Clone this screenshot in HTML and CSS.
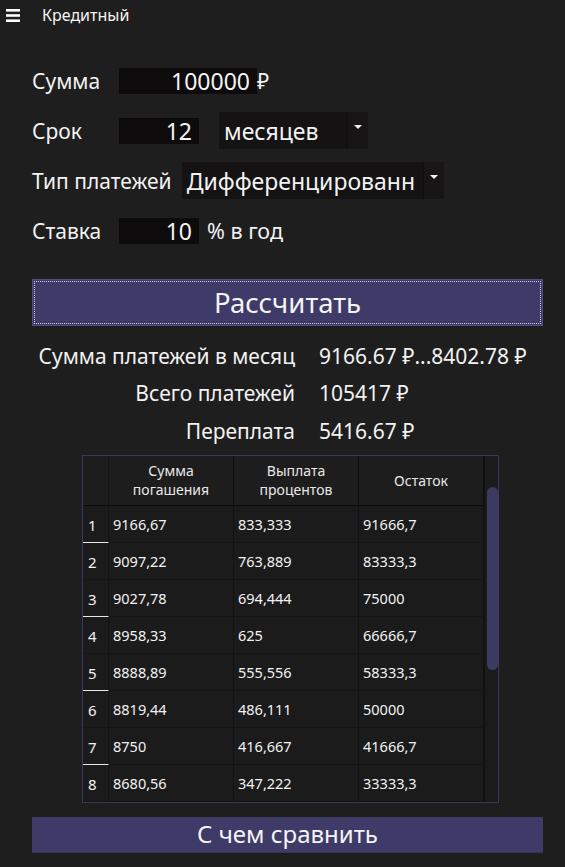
FILE: index.html
```html
<!DOCTYPE html>
<html lang="ru">
<head>
<meta charset="utf-8">
<title>Кредитный</title>
<link rel="stylesheet" href="styles.css">
</head>
<body>
<div class="topbar">
  <svg class="menu" width="14" height="13" viewBox="0 0 14 13"><rect x="0" y="0" width="14" height="2.6" fill="#fff"/><rect x="0" y="5.2" width="14" height="2.6" fill="#fff"/><rect x="0" y="10.4" width="14" height="2.6" fill="#fff"/></svg>
  <span class="title">Кредитный</span>
</div>

<div class="form">
  <div class="row">
    <span class="label">Сумма</span>
    <span class="field field-sum">100000</span>
    <span class="unit">₽</span>
  </div>
  <div class="row">
    <span class="label">Срок</span>
    <span class="field field-short">12</span>
    <div class="select select-term"><span class="select-text">месяцев</span><span class="select-arrow"></span></div>
  </div>
  <div class="row">
    <span class="label">Тип платежей</span>
    <div class="select select-type"><span class="select-text">Дифференцированн</span><span class="select-arrow"></span></div>
  </div>
  <div class="row">
    <span class="label">Ставка</span>
    <span class="field field-short">10</span>
    <span class="unit unit-wide">% в год</span>
  </div>
</div>

<button class="btn btn-calc">Рассчитать</button>

<div class="results">
  <span class="res-label">Сумма платежей в месяц</span><span class="res-value">9166.67 ₽...8402.78 ₽</span>
  <span class="res-label">Всего платежей</span><span class="res-value">105417 ₽</span>
  <span class="res-label">Переплата</span><span class="res-value">5416.67 ₽</span>
</div>

<div class="table">
  <div class="grid">
    <div class="hcell corner"></div>
    <div class="hcell">Сумма<br>погашения</div>
    <div class="hcell">Выплата<br>процентов</div>
    <div class="hcell">Остаток</div>

    <div class="rh odd">1</div><div class="cell">9166,67</div><div class="cell">833,333</div><div class="cell">91666,7</div>
    <div class="rh">2</div><div class="cell">9097,22</div><div class="cell">763,889</div><div class="cell">83333,3</div>
    <div class="rh odd">3</div><div class="cell">9027,78</div><div class="cell">694,444</div><div class="cell">75000</div>
    <div class="rh">4</div><div class="cell">8958,33</div><div class="cell">625</div><div class="cell">66666,7</div>
    <div class="rh odd">5</div><div class="cell">8888,89</div><div class="cell">555,556</div><div class="cell">58333,3</div>
    <div class="rh">6</div><div class="cell">8819,44</div><div class="cell">486,111</div><div class="cell">50000</div>
    <div class="rh odd">7</div><div class="cell">8750</div><div class="cell">416,667</div><div class="cell">41666,7</div>
    <div class="rh">8</div><div class="cell">8680,56</div><div class="cell">347,222</div><div class="cell">33333,3</div>
  </div>
  <div class="track"><div class="thumb"></div></div>
</div>

<button class="btn btn-compare">С чем сравнить</button>
</body>
</html>
```

FILE: styles.css
```css
* { box-sizing: border-box; }
html, body { margin: 0; padding: 0; }
body {
  background: #1f1e1e;
  color: #f2f2f2;
  font-family: "Noto Sans", "Open Sans", sans-serif;
  width: 565px;
  height: 867px;
  overflow: hidden;
}

.topbar {
  height: 30px;
  display: flex;
  align-items: center;
  padding-left: 6px;
  gap: 22px;
}
.menu { display: block; }
.title { font-size: 16px; color: #f4f4f4; }

.form {
  margin-top: 32px;
  padding-left: 32px;
  display: flex;
  flex-direction: column;
  gap: 13px;
}
.row {
  height: 37px;
  display: flex;
  align-items: center;
  font-size: 21px;
}
.label {
  min-width: 80px;
  margin-right: 7px;
  color: #f2f2f2;
}
.field {
  height: 26px;
  line-height: 26px;
  background: #0d0b0b;
  text-align: right;
  padding-right: 7px;
  color: #f4f4f4;
  font-size: 23px;
}
.field-sum { width: 138px; }
.field-short { width: 80px; }
.unit { margin-left: 0; }
.unit-wide { margin-left: 8px; font-size: 21.5px; }

.select {
  height: 37px;
  background: #141212;
  display: flex;
  align-items: center;
  overflow: hidden;
  font-size: 23px;
}
.select-term { width: 149px; margin-left: 20px; }
.select-type { width: 262px; margin-left: 3px; }
.select-text {
  flex: 1;
  padding-left: 5px;
  white-space: nowrap;
}
.select-arrow {
  width: 21px;
  height: 100%;
  background: #171515;
  border-left: 1px solid #100e0e;
  display: flex;
  align-items: center;
  justify-content: center;
}
.select-arrow::after {
  content: "";
  border-left: 4px solid transparent;
  border-right: 4px solid transparent;
  border-top: 4px solid #f0f0f0;
  margin-top: -8px;
}

.btn {
  display: block;
  width: 511px;
  margin-left: 32px;
  color: #f4f4f4;
  font-family: inherit;
  background: #3f3b68;
  padding: 0;
}
.btn-calc {
  margin-top: 30px;
  height: 47px;
  font-size: 27.5px;
  border: 1px solid #524e86;
  outline: 1px dotted #cfcfe0;
  outline-offset: -3px;
}
.btn-compare {
  margin-top: 14px;
  height: 36px;
  font-size: 24px;
  line-height: 34px;
  border: none;
  border-bottom: 1px solid #35325a;
}

.results {
  margin-top: 11px;
  display: grid;
  grid-template-columns: 295px 1fr;
  column-gap: 24px;
  grid-auto-rows: 37.5px;
  align-items: center;
  font-size: 21px;
}
.res-label { text-align: right; }

.table {
  margin-top: 5px;
  margin-left: 82px;
  width: 417px;
  height: 348px;
  border: 1px solid #3a3762;
  display: flex;
  background: #1c1b1b;
}
.grid {
  width: 401px;
  display: grid;
  grid-template-columns: 26px 125px 125px 125px;
  grid-template-rows: 50px repeat(8, 37px);
}
.hcell {
  background: #1e1d1d;
  border-right: 1px solid #0e0d0d;
  border-bottom: 1px solid #0e0d0d;
  font-size: 14px;
  line-height: 19px;
  color: #e8e8e8;
  text-align: center;
  display: flex;
  align-items: center;
  justify-content: center;
}
.corner { border-right: 1px solid #161515; }
.rh {
  border-right: 1px solid #141313;
  border-bottom: 1px solid #171616;
  font-size: 15px;
  padding-left: 5px;
  padding-top: 2px;
  display: flex;
  align-items: center;
}
.rh.odd { border-bottom-color: #e8e8e8; }
.cell {
  border-right: 1px solid #141313;
  border-bottom: 1px solid #161515;
  font-size: 14.5px;
  padding-left: 4px;
  display: flex;
  align-items: center;
}
.track {
  width: 14px;
  border-left: 1px solid #121111;
  padding: 31px 0 0 2px;
}
.thumb {
  width: 11px;
  height: 183px;
  border-radius: 6px;
  background: #3c3963;
}
```
